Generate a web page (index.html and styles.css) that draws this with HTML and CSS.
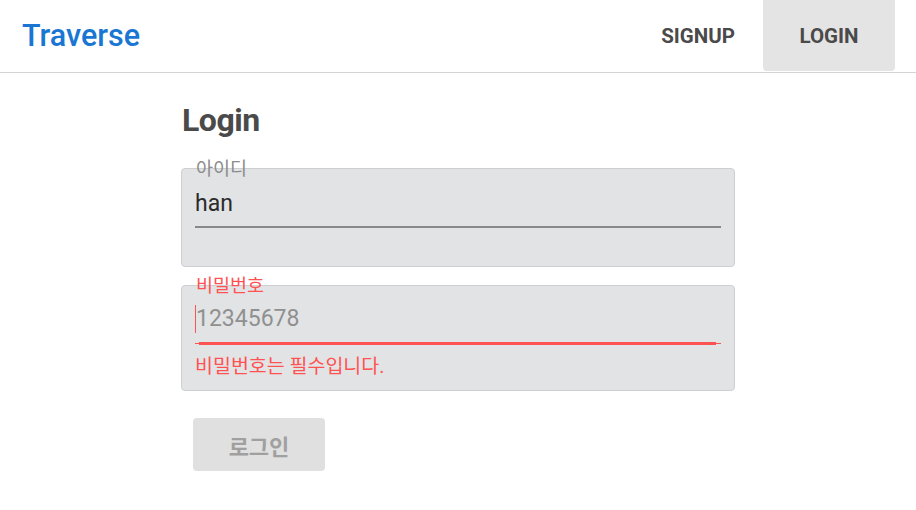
FILE: index.html
```html
<!DOCTYPE html>
<html lang="ko">
<head>
<meta charset="utf-8">
<link rel="stylesheet" href="styles.css">
</head>
<body>
<header class="topbar">
  <div class="brand">Traverse</div>
  <nav class="nav">
    <a class="nav-btn">SIGNUP</a>
    <a class="nav-btn active">LOGIN</a>
  </nav>
</header>
<main class="main">
  <h1 class="title">Login</h1>
  <div class="field field-id">
    <span class="label">아이디</span>
    <div class="value">han</div>
    <div class="line"></div>
  </div>
  <div class="field field-pw">
    <span class="label error">비밀번호</span>
    <div class="value placeholder"><span class="caret"></span>12345678</div>
    <div class="line error-line"><div class="bar"></div></div>
    <div class="msg">비밀번호는 필수입니다.</div>
  </div>
  <button class="submit">로그인</button>
</main>
</body>
</html>
```

FILE: styles.css
```css
* { box-sizing: border-box; }
body {
  margin: 0;
  font-family: Roboto, "Noto Sans CJK KR", sans-serif;
  background: #fff;
  width: 916px;
  height: 510px;
  overflow: hidden;
}
.topbar {
  height: 73px;
  border-bottom: 1px solid #d4d4d4;
  display: flex;
  align-items: flex-start;
  justify-content: space-between;
  padding: 0 21px 0 22px;
}
.brand {
  color: #1976d2;
  font-size: 30.5px;
  font-weight: 500;
  line-height: 72px;
}
.nav {
  display: flex;
  align-items: flex-start;
}
.nav-btn {
  display: block;
  height: 71px;
  line-height: 72px;
  padding: 0 28px;
  font-size: 20.5px;
  font-weight: 700;
  color: #4a4a4a;
  border-radius: 0 0 4px 4px;
}
.nav-btn.active {
  background: #e4e4e4;
  width: 132px;
  text-align: center;
  padding: 0;
}
.main {
  width: 554px;
  margin-left: 181px;
  display: flex;
  flex-direction: column;
}
.title {
  margin: 28px 0 0 1px;
  font-size: 32px;
  font-weight: 700;
  color: #4a4a4a;
  line-height: 38px;
  letter-spacing: -0.5px;
}
.field {
  position: relative;
  background: #e2e3e5;
  border: 1px solid #cdcfd2;
  border-radius: 4px;
  padding: 0 13px;
}
.field-id { margin-top: 29px; height: 99px; padding-top: 19px; }
.field-pw { margin-top: 18px; height: 106px; padding-top: 17px; }
.label {
  position: absolute;
  left: 14px;
  top: -12px;
  font-size: 18.5px;
  line-height: 24px;
  color: #8c8c8c;
}
.label.error { color: #ff5252; }
.value {
  font-size: 23px;
  line-height: 32px;
  color: #2b2b2b;
  height: 32px;
  display: flex;
  align-items: center;
}
.value.placeholder { color: #909090; }
.caret {
  display: inline-block;
  width: 1px;
  height: 28px;
  background: #ff5252;
}
.line {
  margin-top: 6px;
  height: 2px;
  background: #888;
}
.error-line {
  margin-top: 8px;
  height: 1px;
  background: #ff5252;
  position: relative;
}
.error-line .bar {
  position: absolute;
  left: 4px;
  right: 5px;
  top: -1px;
  height: 3px;
  background: #ff5252;
}
.msg {
  margin-top: 11px;
  font-size: 19.5px;
  line-height: 24px;
  color: #ff5252;
}
.submit {
  margin: 27px 0 0 12px;
  width: 132px;
  height: 53px;
  border: none;
  border-radius: 4px;
  background: #e0e0e0;
  color: #a0a0a0;
  font-family: Roboto, "Noto Sans CJK KR", sans-serif;
  font-size: 22px;
  font-weight: 700;
  align-self: flex-start;
  padding: 0;
}
```
